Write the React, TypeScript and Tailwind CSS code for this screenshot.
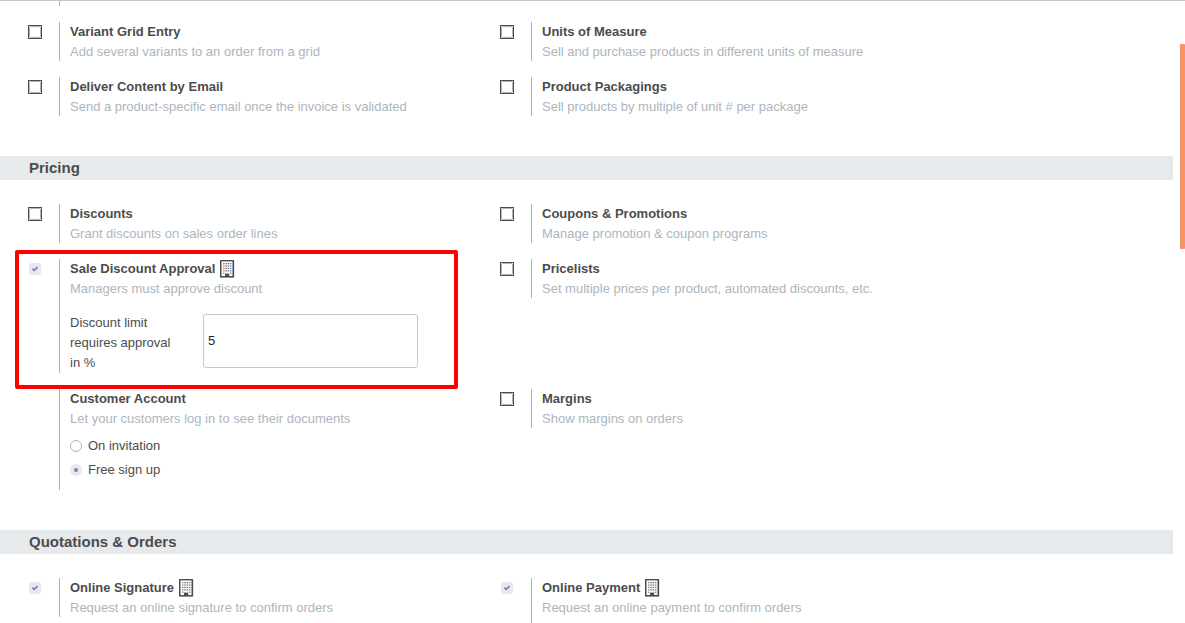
import { useId, useState, type ReactNode } from "react";

const WINDOW_COLUMNS = [
  { x: 3, fill: "#b08a68" },
  { x: 5.3, fill: "#74747f" },
  { x: 7.6, fill: "#74747f" },
  { x: 9.9, fill: "#6a86ad" },
];
const WINDOW_ROWS = [3, 5.4, 7.8, 10.2];

function BuildingIcon() {
  return (
    <svg
      viewBox="0 0 15 18"
      className="ml-[5px] h-[18px] w-[15px] shrink-0"
      role="img"
      aria-label="Values set here are company-specific."
    >
      <rect x="0" y="0" width="14.4" height="17.4" rx="0.6" fill="#7fa9d2" opacity="0.7" />
      <rect x="0" y="0" width="14" height="17.4" rx="0.5" fill="#4c4c4c" />
      <rect x="1.5" y="1.4" width="11" height="14.6" fill="#ffffff" />
      {WINDOW_COLUMNS.map(({ x, fill }) =>
        WINDOW_ROWS.map((y) => (
          <rect key={`${x}-${y}`} x={x} y={y} width="1.5" height="1.3" fill={fill} />
        )),
      )}
      <rect x="3" y="12.6" width="1.5" height="1.3" fill="#b08a68" />
      <rect x="9.9" y="12.6" width="1.5" height="1.3" fill="#6a86ad" />
      <rect x="5" y="13.6" width="4.2" height="3" fill="#4c4c4c" />
    </svg>
  );
}

function CheckBox({ id, initial }: { id: string; initial: boolean }) {
  const [checked, setChecked] = useState(initial);
  return (
    <span
      className={
        checked
          ? "relative block border border-transparent"
          : "relative block border border-[#4c4c4c]"
      }
    >
      <input
        id={id}
        type="checkbox"
        checked={checked}
        onChange={(e) => setChecked(e.target.checked)}
        className="block size-3 appearance-none rounded-xs border border-[#adb5bd] bg-white checked:border-[#e6eaed] checked:bg-[#e6eaed]"
      />
      {checked && (
        <svg
          viewBox="0 0 12 12"
          className="pointer-events-none absolute inset-0 size-3"
          fill="none"
          stroke="#7c7bad"
          strokeWidth="1.6"
        >
          <path d="M3.4 5.7 5.2 7.3 8.6 4.1" />
        </svg>
      )}
    </span>
  );
}

type SettingProps = {
  title: string;
  description: string;
  checked?: boolean;
  noBox?: boolean;
  company?: boolean;
  highlight?: boolean;
  children?: ReactNode;
};

function Setting({ title, description, checked = false, noBox, company, highlight, children }: SettingProps) {
  const id = useId();
  return (
    <div className="relative flex items-start">
      <div className="w-[59px] shrink-0 pt-[3px] pl-7">
        <div className="w-fit">{!noBox && <CheckBox id={id} initial={checked} />}</div>
      </div>
      <div className="min-w-0 flex-1 border-l border-[#b3b3b3] pl-[10px]">
        <div className="flex h-5 items-center font-bold">
          {noBox ? <span>{title}</span> : <label htmlFor={id}>{title}</label>}
          {company && <BuildingIcon />}
        </div>
        <p className="leading-[19px] text-[#adb5bd]">{description}</p>
        {children}
      </div>
      {highlight && (
        <div className="pointer-events-none absolute top-[-9px] left-[15px] z-10 h-[139px] w-[443px] rounded-xs border-4 border-[#ff0000]" />
      )}
    </div>
  );
}

function Heading({ children }: { children: ReactNode }) {
  return (
    <h2 className="mt-10 mb-6 bg-[#e6eaed] pl-[29px] text-[15px] leading-6 font-bold">{children}</h2>
  );
}

function Grid({ children }: { children: ReactNode }) {
  return <div className="grid max-w-[944px] grid-cols-2 items-start gap-y-4">{children}</div>;
}

function Radio({ label, defaultChecked }: { label: string; defaultChecked?: boolean }) {
  return (
    <label className="flex h-6 items-center gap-[6px]">
      <input
        type="radio"
        name="signup"
        defaultChecked={defaultChecked}
        className="size-3 appearance-none rounded-full border border-[#adb5bd] bg-white checked:border-4 checked:border-[#e6eaed] checked:bg-[#7c7bad]"
      />
      {label}
    </label>
  );
}

export default function App() {
  return (
    <div className="relative h-screen overflow-hidden border-t border-[#c8c8c8] bg-white pr-3 font-['Liberation_Sans',Arial,sans-serif] text-[13px] leading-5 text-[#4c4c4c]">
      <Grid>
        <div className="col-span-2 ml-[59px] h-[5px] border-l border-[#b3b3b3]" />
        <Setting title="Variant Grid Entry" description="Add several variants to an order from a grid" />
        <Setting title="Units of Measure" description="Sell and purchase products in different units of measure" />
        <Setting
          title="Deliver Content by Email"
          description="Send a product-specific email once the invoice is validated"
        />
        <Setting title="Product Packagings" description="Sell products by multiple of unit # per package" />
      </Grid>

      <Heading>Pricing</Heading>
      <Grid>
        <Setting title="Discounts" description="Grant discounts on sales order lines" />
        <Setting title="Coupons & Promotions" description="Manage promotion & coupon programs" />
        <Setting
          title="Sale Discount Approval"
          description="Managers must approve discount"
          checked
          company
          highlight
        >
          <div className="flex pt-[15px]">
            <label htmlFor="limit" className="w-[133px] shrink-0 pr-6">
              Discount limit requires approval in %
            </label>
            <div className="pt-px">
              <input
                id="limit"
                type="text"
                defaultValue="5"
                className="block h-[54px] w-[215px] rounded-[3px] border border-[#c8c8c8] px-1 pb-[2px] text-[#212529]"
              />
            </div>
          </div>
        </Setting>
        <Setting title="Pricelists" description="Set multiple prices per product, automated discounts, etc." />
        <Setting title="Customer Account" description="Let your customers log in to see their documents" noBox>
          <div className="pt-[6px] pb-2">
            <Radio label="On invitation" />
            <Radio label="Free sign up" defaultChecked />
          </div>
        </Setting>
        <Setting title="Margins" description="Show margins on orders" />
      </Grid>

      <Heading>Quotations &amp; Orders</Heading>
      <Grid>
        <Setting
          title="Online Signature"
          description="Request an online signature to confirm orders"
          checked
          company
        />
        <Setting
          title="Online Payment"
          description="Request an online payment to confirm orders"
          checked
          company
        >
          <div className="h-10" />
        </Setting>
      </Grid>

      <div className="absolute top-[43px] right-0 h-[205px] w-[5px] rounded-[1px] bg-[#f5936b]" />
    </div>
  );
}
